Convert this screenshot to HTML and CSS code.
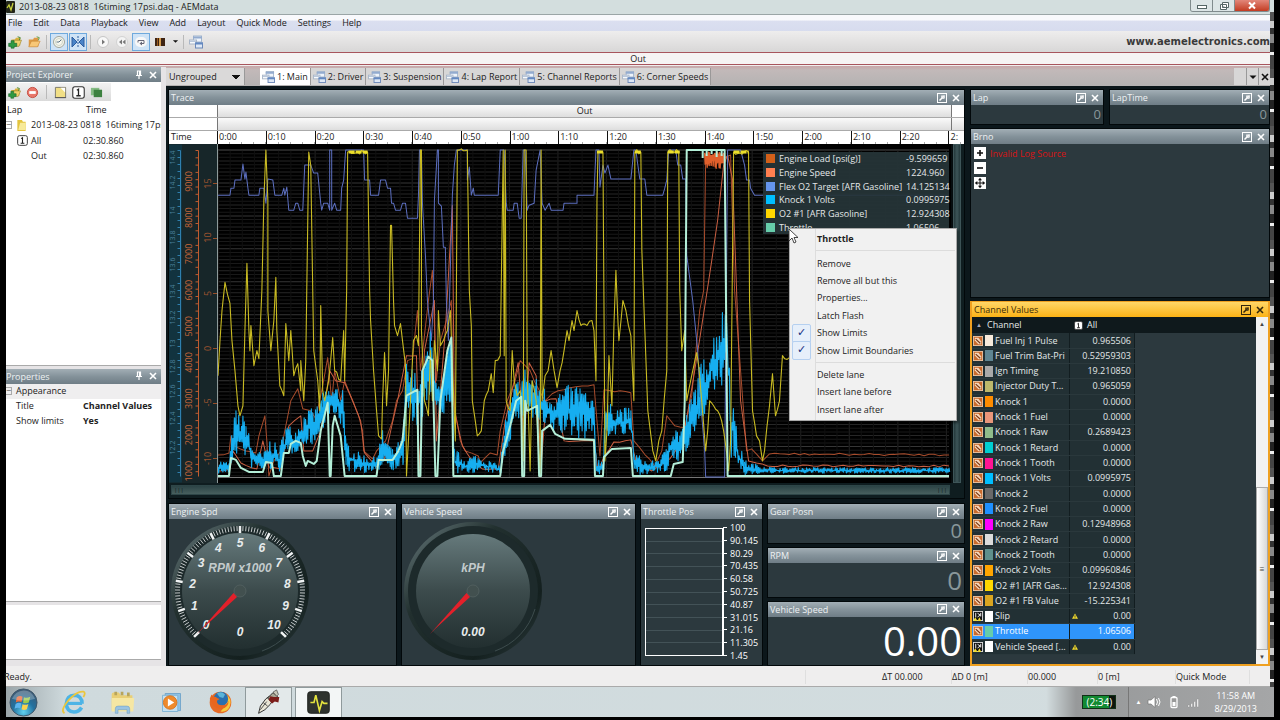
FILE: index.html
```html
<!DOCTYPE html>
<html lang="en">
<head>
<meta charset="utf-8">
<title>AEMdata</title>
<link rel="stylesheet" href="styles.css">
</head>
<body>
<svg class="defs" aria-hidden="true">
  <symbol id="i-wrench" viewBox="0 0 10 10"><rect x=".5" y=".5" width="9" height="9" fill="none" stroke="currentColor"/><path d="M2.5 7.5 5.5 4.5M5 2.5v2.5h2.500" fill="none" stroke="currentColor" stroke-width="1.500"/><path d="M5 3 7.500 2 8 5z" fill="currentColor"/></symbol>
  <symbol id="i-close" viewBox="0 0 10 10"><path d="M2 2l6 6M8 2l-6 6" stroke="currentColor" stroke-width="1.600"/></symbol>
  <symbol id="i-pin" viewBox="0 0 10 10"><path d="M3.500 1h3v4.500h-3zM2 5.500h6M5 5.500v3.500" fill="none" stroke="currentColor" stroke-width="1.200"/><path d="M5 1h1.500v4.500H5z" fill="currentColor"/></symbol>
  <symbol id="i-open" viewBox="0 0 16 14"><path d="M2 4h5l1-2h5v10H2z" fill="#dd9a45"/><path d="M5 6h10l-3 6.500H2z" fill="#f8c776" stroke="#c07a2c" stroke-width=".6"/><path d="M11 1l3 1-1 3" fill="none" stroke="#589a3a"/></symbol>
  <symbol id="i-openadd" viewBox="0 0 16 14"><path d="M4 4h4l1-2h5v9H4z" fill="#d8b23f"/><path d="M6 5h9.500l-3 7H4z" fill="#f0d06a" stroke="#8d7a2c" stroke-width=".6"/><path d="M11 1l3 1-1 3" fill="none" stroke="#39822b"/><path d="M3.500 5.500h3.500v3h3v3.500H7v2H3.500v-2H.8V8.500h2.700z" fill="#2f9a42" stroke="#17652a" stroke-width=".7"/></symbol>
  <symbol id="i-layout" viewBox="0 0 14 13"><rect x="4.500" y=".5" width="8" height="6" fill="#eef4fb" stroke="#a4b5cc"/><path d="M4 1h9v2H4z" fill="#93abcf"/><rect x=".5" y="4.500" width="7" height="4" fill="#f7fafd" stroke="#a9b6c8"/><path d="M1 5h6v1.500H1z" fill="#b9c7da"/><rect x="6.500" y="7.500" width="7" height="5" fill="#dfe9f6" stroke="#6b88b8"/><path d="M6 7h8v2H6z" fill="#6389c2"/></symbol>
  <symbol id="i-one" viewBox="0 0 12 12"><rect x=".7" y=".7" width="10.600" height="10.600" rx="2" fill="#fff" stroke="#333"/><path d="M4.500 4 6 3v6M4 9h4" fill="none" stroke="#222" stroke-width="1.200"/></symbol>
  <symbol id="i-chan" viewBox="0 0 11 11"><rect x=".5" y=".5" width="10" height="10" fill="#c96a2c" stroke="#efc3a0"/><path d="M2 2h4l3 4v3H6L2 5z" fill="#f6d8bd"/><path d="M3 3.500 8 8" stroke="#7c3510" stroke-width="1.300"/></symbol>
  <symbol id="i-math" viewBox="0 0 11 11"><rect x=".5" y=".5" width="10" height="10" fill="#111" stroke="#ddd"/><path d="M3 2v5M5 2.500l3 2-3 2M8.500 2v4" fill="none" stroke="#fff"/><path d="M0 11l2.500-4L5 11zM5 11l2-4 2 4z" fill="#f0dc33"/></symbol>
  <symbol id="i-warn" viewBox="0 0 8 8"><path d="M4 0.500 8 7.500H0z" fill="#f2dc2f"/><path d="M4 3v2.500M4 6v1" stroke="#222"/></symbol>
</svg>
<div class="screen">
<div class="window">
  <header class="titlebar">
    <svg class="appico" viewBox="0 0 9 12"><rect width="9" height="12" rx="1" fill="#22251a"/><path d="M1 7 3 4l2 5 2-7" fill="none" stroke="#c9d23c" stroke-width="1.300"/></svg>
    <span class="caption">2013-08-23 0818&nbsp; 16timing 17psi.daq - AEMdata</span>
    <div class="winbtns"><button aria-label="Minimize"><svg viewBox="0 0 12 10"><rect x="1.500" y="4.500" width="9" height="3" fill="#fff" stroke="#566"/></svg></button><button aria-label="Restore"><svg viewBox="0 0 12 10"><path d="M4.500 1.500h6v5h-6zM2.500 3.500h6v5h-6z" fill="#fff" stroke="#566"/><path d="M4.500 5.500h2v1h-2z" fill="#566"/></svg></button><button class="x" aria-label="Close"><svg viewBox="0 0 12 10"><path d="M3 1.500l6 6M9 1.500l-6 6" stroke="#fff" stroke-width="2"/></svg></button></div>
  </header>
  <nav class="menubar"><button>File</button><button>Edit</button><button>Data</button><button>Playback</button><button>View</button><button>Add</button><button>Layout</button><button>Quick Mode</button><button>Settings</button><button>Help</button></nav>
  <div class="toolbar">
    <button aria-label="Add log"><svg><use href="#i-openadd"/></svg></button>
    <button aria-label="Open log"><svg><use href="#i-open"/></svg></button>
    <i></i>
    <button class="on" aria-label="Clock"><svg viewBox="0 0 14 14"><circle cx="7" cy="7" r="5.500" fill="#f7f7ee" stroke="#a3a69a"/><path d="M7 7l3-3M7 7H4.500" stroke="#5c7285"/><circle cx="7" cy="7" r="3.500" fill="none" stroke="#cfd6c8"/></svg></button>
    <button class="on" aria-label="Mirror"><svg viewBox="0 0 14 14"><path d="M1 2l5 5-5 5zM13 2 8 7l5 5z" fill="#4a84c8" stroke="#2c5c9e"/><path d="M7 1v12" stroke="#2c5c9e" stroke-dasharray="2 1"/></svg></button>
    <i></i>
    <button aria-label="Play"><svg viewBox="0 0 14 14"><circle cx="7" cy="7" r="5.500" fill="#f8f8f8" stroke="#c6c6c6"/><path d="M6 4.500 9 7 6 9.500z" fill="#777"/></svg></button>
    <button aria-label="Rewind"><svg viewBox="0 0 14 14"><circle cx="7" cy="7" r="5.500" fill="#f4f4f4" stroke="#d2d2d2"/><path d="M7 4.500 4 7l3 2.500zM10.500 4.500l-3 2.500 3 2.500z" fill="#777"/></svg></button>
    <button class="on" aria-label="Loop"><svg viewBox="0 0 14 14"><rect x="1" y="2" width="12" height="10" rx="5" fill="#f8f8f8"/><path d="M4 7.500V5.500h6v3H7" fill="none" stroke="#667"/><path d="M8 6.500 5.500 8.500 8 10.500z" fill="#667"/></svg></button>
    <button aria-label="Speed"><svg viewBox="0 0 14 14"><path d="M2 3h10v8H2z" fill="#d49c4c"/><path d="M2 3h4v8H2zM8 3h4v8H8z" fill="#3e2413"/><path d="M4 3h1v8H4z" fill="#9a5a20"/></svg></button>
    <button class="drop" aria-label="More"><svg viewBox="0 0 14 14"><path d="M3 5h8l-4 4z" fill="#111"/></svg></button>
    <i></i>
    <button aria-label="Layouts"><svg><use href="#i-layout"/></svg></button>
    <a class="site" href="#">www.aemelectronics.com</a>
  </div>
  <div class="lapbar">Out</div>
  <div class="body">
    <aside class="side">
      <section class="tool explorer">
        <h2><span>Project Explorer</span><button aria-label="Pin"><svg><use href="#i-pin"/></svg></button><button aria-label="Close"><svg><use href="#i-close"/></svg></button></h2>
        <div class="minibar">
          <button aria-label="Add"><svg><use href="#i-openadd"/></svg></button>
          <button aria-label="Remove"><svg viewBox="0 0 14 14"><circle cx="7" cy="7" r="5.500" fill="#e8776a" stroke="#c2483e"/><path d="M3.500 5.500h7v3h-7z" fill="#fff"/></svg></button>
          <i></i>
          <button aria-label="Note"><svg viewBox="0 0 14 14"><path d="M1.500 1.500h11v11h-11z" fill="#f1df86" stroke="#77766a"/><path d="M7 2h5v5z" fill="#fff"/><path d="M1 12.500h12" stroke="#555"/></svg></button>
          <button aria-label="Lap"><svg><use href="#i-one"/></svg></button>
          <button aria-label="Compare"><svg viewBox="0 0 14 14"><path d="M1 2h9v8H1z" fill="#85bb84"/><path d="M4 4h9v8H4z" fill="#3d8140"/></svg></button>
        </div>
        <table class="laps">
          <tr><th>Lap</th><th>Time</th></tr>
          <tr><td colspan="2" class="file"><span class="tog">−</span><svg viewBox="0 0 11 13"><path d="M1 1h5l1 2h3v10H1z" fill="#e3c43f"/><path d="M4 4h6v8H2z" fill="#f7ea9a"/></svg>2013-08-23 0818&nbsp; 16timing 17psi.daq</td></tr>
          <tr><td class="lap"><svg><use href="#i-one"/></svg>All</td><td>02:30.860</td></tr>
          <tr><td class="lap out">Out</td><td>02:30.860</td></tr>
        </table>
      </section>
      <section class="tool props">
        <h2><span>Properties</span><button aria-label="Pin"><svg><use href="#i-pin"/></svg></button><button aria-label="Close"><svg><use href="#i-close"/></svg></button></h2>
        <table class="pg">
          <tr class="cat"><td colspan="2"><span class="tog">−</span>Appearance</td></tr>
          <tr><td>Title</td><td><b>Channel Values</b></td></tr>
          <tr><td>Show limits</td><td><b>Yes</b></td></tr>
        </table>
      </section>
      <section class="tool hint"></section>
    </aside>
    <main class="main">
      <div class="tabs">
        <select aria-label="Group"><option>Ungrouped</option></select>
        <button class="sel"><svg><use href="#i-layout"/></svg>1: Main</button>
        <button><svg><use href="#i-layout"/></svg>2: Driver</button>
        <button><svg><use href="#i-layout"/></svg>3: Suspension</button>
        <button><svg><use href="#i-layout"/></svg>4: Lap Report</button>
        <button><svg><use href="#i-layout"/></svg>5: Channel Reports</button>
        <button><svg><use href="#i-layout"/></svg>6: Corner Speeds</button>
        <div class="tabend"><button aria-label="Tab list"><svg viewBox="0 0 10 10"><path d="M1.500 3.500h7L5 7z" fill="#111"/></svg></button><button aria-label="Close tab"><svg><use href="#i-close"/></svg></button></div>
      </div>
      <div class="dock">
        <div class="center">
          <section class="panel trace">
            <h2><span>Trace</span><button aria-label="Settings"><svg><use href="#i-wrench"/></svg></button><button aria-label="Close"><svg><use href="#i-close"/></svg></button></h2>
            <div class="ruler">
              <div class="r1"><span></span><span class="mid">Out</span><span></span></div>
              <div class="r1"><span></span><span class="mid"></span><span class="sh"></span></div>
              <div class="r1 time"><span>Time</span><div class="ticks" id="ticks"></div></div>
            </div>
            <div class="plotrow">
              <svg class="axes" id="axes" viewBox="169 144 48 338"></svg>
              <div class="plot">
                <svg id="plot" viewBox="217 144 735 338" preserveAspectRatio="none"></svg>
                <div class="legend">
                  <i style="background:#d2601a"></i><span>Engine Load [psi(g)]</span><span>-9.599659</span>
                  <i style="background:#ff7f50"></i><span>Engine Speed</span><span>1224.960</span>
                  <i style="background:#6495ed"></i><span>Flex O2 Target [AFR Gasoline]</span><span>14.125134</span>
                  <i style="background:#00bfff"></i><span>Knock 1 Volts</span><span>0.0995975</span>
                  <i style="background:#ffd700"></i><span>O2 #1 [AFR Gasoline]</span><span>12.924308</span>
                  <i style="background:#66cdaa"></i><span>Throttle</span><span>1.06506</span>
                </div>
              </div>
              <div class="vscroll"><div></div></div>
            </div>
            <div class="hscroll"><div><span>|||</span><span>|||</span></div></div>
            <div class="ctx" role="menu">
              <button class="hd">Throttle</button><hr>
              <button>Remove</button><button>Remove all but this</button><button>Properties...</button><button>Latch Flash</button>
              <button class="ck">Show Limits</button><button class="ck">Show Limit Boundaries</button><hr>
              <button>Delete lane</button><button>Insert lane before</button><button>Insert lane after</button>
            </div>
            <svg class="cursor" viewBox="0 0 11 16"><path d="M1 1v12l3-3 2 5 2-1-2-4.500h4z" fill="#fff" stroke="#333" stroke-width=".9"/></svg>
          </section>
          <div class="gauges">
            <section class="panel"><h2><span>Engine Spd</span><button aria-label="Settings"><svg><use href="#i-wrench"/></svg></button><button aria-label="Close"><svg><use href="#i-close"/></svg></button></h2><svg class="dial" id="dial1" viewBox="-72 -72 144 144"></svg></section>
            <section class="panel"><h2><span>Vehicle Speed</span><button aria-label="Settings"><svg><use href="#i-wrench"/></svg></button><button aria-label="Close"><svg><use href="#i-close"/></svg></button></h2><svg class="dial" id="dial2" viewBox="-72 -72 144 144"></svg></section>
            <section class="panel"><h2><span>Throttle Pos</span><button aria-label="Settings"><svg><use href="#i-wrench"/></svg></button><button aria-label="Close"><svg><use href="#i-close"/></svg></button></h2>
              <div class="bar"><div class="barbox"><i></i><i></i><i></i><i></i><i></i><i></i><i></i><i></i><i></i><i></i></div>
              <div class="scale"><span>100</span><span>90.145</span><span>80.29</span><span>70.435</span><span>60.58</span><span>50.725</span><span>40.87</span><span>31.015</span><span>21.16</span><span>11.305</span><span>1.45</span></div></div>
            </section>
            <div class="stack">
              <section class="panel"><h2><span>Gear Posn</span><button aria-label="Settings"><svg><use href="#i-wrench"/></svg></button><button aria-label="Close"><svg><use href="#i-close"/></svg></button></h2><output class="n1">0</output></section>
              <section class="panel"><h2><span>RPM</span><button aria-label="Settings"><svg><use href="#i-wrench"/></svg></button><button aria-label="Close"><svg><use href="#i-close"/></svg></button></h2><output class="n2">0</output></section>
              <section class="panel"><h2><span>Vehicle Speed</span><button aria-label="Settings"><svg><use href="#i-wrench"/></svg></button><button aria-label="Close"><svg><use href="#i-close"/></svg></button></h2><output class="n3">0.00</output></section>
            </div>
          </div>
        </div>
        <div class="right">
          <div class="toprow">
            <section class="panel"><h2><span>Lap</span><button aria-label="Settings"><svg><use href="#i-wrench"/></svg></button><button aria-label="Close"><svg><use href="#i-close"/></svg></button></h2><output class="n0">0</output></section>
            <section class="panel"><h2><span>LapTime</span><button aria-label="Settings"><svg><use href="#i-wrench"/></svg></button><button aria-label="Close"><svg><use href="#i-close"/></svg></button></h2><output class="n0">0</output></section>
          </div>
          <section class="panel"><h2><span>Brno</span><button aria-label="Settings"><svg><use href="#i-wrench"/></svg></button><button aria-label="Close"><svg><use href="#i-close"/></svg></button></h2>
            <div class="map"><div><button aria-label="Zoom in"><svg viewBox="0 0 12 12"><path d="M6 3v6M3 6h6" stroke="#111" stroke-width="1.600"/></svg></button><button aria-label="Zoom out"><svg viewBox="0 0 12 12"><path d="M3 6h6" stroke="#111" stroke-width="1.600"/></svg></button><button aria-label="Fit"><svg viewBox="0 0 12 12"><path d="M6 2v8M2 6h8" stroke="#111"/><path d="M6 .8 8 3.300H4zM6 11.200 8 8.700H4zM.8 6 3.300 4v4zM11.200 6 8.700 4v4z" fill="#111"/></svg></button></div><p>Invalid Log Source</p></div>
          </section>
          <section class="panel active"><h2><span>Channel Values</span><button aria-label="Settings"><svg><use href="#i-wrench"/></svg></button><button aria-label="Close"><svg><use href="#i-close"/></svg></button></h2>
            <div class="chwrap"><div class="chlist">
              <div class="chead"><span class="up">▲</span><span>Channel</span><span class="all"><svg><use href="#i-one"/></svg>All</span></div>
              <div class="chbody"><table id="chan"></table></div>
            </div><div class="cscroll"><span>▲</span><div>≡</div><span>▼</span></div></div>
          </section>
        </div>
      </div>
    </main>
  </div>
  <footer class="status"><span>Ready.</span><span></span><span>ΔT 00.000</span><span>ΔD 0 [m]</span><span>00.000</span><span>0 [m]</span><span>Quick Mode</span><span></span></footer>
  <div class="edge"></div>
</div>
<div class="taskbar">
  <button class="orb" aria-label="Start"><svg viewBox="0 0 30 30"><defs><radialGradient id="g1" cx=".5" cy=".85" r=".8"><stop offset="0" stop-color="#5fd0ee"/><stop offset=".5" stop-color="#23719f"/><stop offset="1" stop-color="#3d5a74"/></radialGradient></defs><circle cx="15" cy="15" r="14" fill="url(#g1)" stroke="#40576a"/><path d="M8 9.500q3-2 6-.5l-1 5.500q-3-1.500-6 .5z" fill="#ee6a38"/><path d="M15.500 9.500q3 1.500 6.500-.5l-1.500 6q-3 1.500-6 .2z" fill="#9ccb4b"/><path d="M6.800 16.500q3-2 6-.5l-1 5q-3-1.500-6 .5z" fill="#5eb4ec"/><path d="M14 16.700q3 1.500 6-.2l-1.500 5.500q-3 1.500-5.500 0z" fill="#fbd14b"/><path d="M3 11q4-8 12-8.500T27 11q-12 4-24 0z" fill="#fff" opacity=".25"/></svg></button>
  <button aria-label="Internet Explorer"><svg viewBox="0 0 30 30"><path d="M24.500 16H8.500" stroke="#4db4e6" stroke-width="3.500"/><path d="M24 20.500q-3 5-8.500 5-8-.5-8.500-9 .5-9 9-9.500 8.500.5 8.500 9.500" fill="none" stroke="#4db4e6" stroke-width="4"/><path d="M5 27Q0 24 9 13 19 2 26 3q3 1 0 6" fill="none" stroke="#ecc63c" stroke-width="2"/></svg></button>
  <button aria-label="Explorer"><svg viewBox="0 0 30 30"><path d="M3 6q0-2 2-2h6l2 3h13v17H3z" fill="#e9cf76"/><path d="M6 3h3v4H6zM13 3h3v4h-3zM20 4h3v4h-3z" fill="#b7a45c"/><path d="M3 10h25l-1 15H3z" fill="#f6e7a3"/><path d="M7 27v-5q0-3 3-3h10q3 0 3 3v5h-3v-4H10v4z" fill="#9bc4e2" stroke="#6d9dc0" stroke-width=".6"/></svg></button>
  <button aria-label="Media Player"><svg viewBox="0 0 30 30"><path d="M8 5h17v19H8z" fill="#8fc3e6" stroke="#6fa4ca"/><path d="M5 7h17v18H5z" fill="#c4e0f0" stroke="#7cb1d3"/><circle cx="13.500" cy="15" r="7.500" fill="#ee8a2c" stroke="#d9731c"/><path d="M11 10.500 18 15l-7 4.500z" fill="#fff"/></svg></button>
  <button aria-label="Firefox"><svg viewBox="0 0 30 30"><circle cx="15" cy="15" r="12" fill="#e66a25"/><path d="M20 5q9 6 5 15-3 6-10 5 8-6 5-20z" fill="#f7c93c"/><circle cx="15.500" cy="11" r="8" fill="#2a6fae"/><path d="M11 5q5-3 9 1l-2 4-4-1z" fill="#5bb4d8"/><path d="M3 11 5 6l2 3q3-1 4 1l3 1-3 2q0 5 6 5 5 0 7-5 0 8-8 9-8 0-10-6z" fill="#e8661f"/></svg></button>
  <button class="run" aria-label="Tuner"><svg viewBox="0 0 30 30"><path d="M4 27 6 19l6-8 4-3 4 4-3 5-6 6z" fill="#e9e6d6" stroke="#222"/><path d="M14 10 20 4l5 4-6 7z" fill="#a9a795" stroke="#222"/><path d="M20 3.500l4-2.500 2 5-2 2z" fill="#c9c7b8" stroke="#333" stroke-width=".7"/><path d="M17 8l4 1 6 0-1 6-4-1-3 2-4-4z" fill="#7c1d1a"/><path d="M9 15l5 4M6 23l7-9" stroke="#444"/></svg></button>
  <button class="run act" aria-label="AEMdata"><svg viewBox="0 0 30 30"><rect x="3" y="3" width="24" height="24" rx="3" fill="#2f332e" stroke="#1b1e1b"/><path d="M6 15h4l2-8 4 17 3-10 2 2h4" fill="none" stroke="#e4e33e" stroke-width="1.800"/></svg></button>
  <div class="tray">
    <div class="batt"><span>(2:34)</span></div>
    <div class="notif">
      <span class="tri">▲</span>
      <svg viewBox="0 0 14 14"><path d="M1 5h3l4-3.500v11L4 9H1z" fill="#fff" stroke="#777" stroke-width=".7"/><path d="M9.500 4q2 3 0 6M11.500 3q3 4 0 8" fill="none" stroke="#fff"/></svg>
      <svg viewBox="0 0 14 14"><rect x="4" y="2.500" width="6" height="10" rx="1" fill="#999" stroke="#fff" stroke-width="1.300"/><path d="M5.500 1h3v2h-3zM5.500 7h3v4h-3z" fill="#fff"/></svg>
      <svg viewBox="0 0 14 14"><path d="M1 12v-2h1.500v2zM4 12V8.500h1.500V12zM7 12V6.500h1.500V12zM10 12V4h1.500v8z" fill="#fff" stroke="#888" stroke-width=".4"/></svg>
      <time>11:58 AM<br>8/29/2013</time>
    </div>
  </div>
</div>
</div>
<script src="app.js"></script>
</body>
</html>
```
FILE: styles.css
```css
* { box-sizing: border-box; }
html, body { height: 100%; margin: 0; background: #000; }
body { font: 9px/14px "Open Sans", "Noto Sans", sans-serif; color: #222; overflow: hidden; }
button, select, input { font: inherit; color: inherit; margin: 0; padding: 0; border: 0; background: none; }
h2, p { margin: 0; font-size: inherit; font-weight: normal; }
table { border-collapse: collapse; border-spacing: 0; }
td, th { padding: 0; text-align: left; font-weight: normal; }
svg { display: block; flex: none; }
.defs { position: absolute; width: 0; height: 0; }

.screen { height: 100vh; padding: 0 6px 3px; display: flex; flex-direction: column; }
.window { flex: 1; min-height: 0; display: flex; flex-direction: column; position: relative; padding-right: 4px; background: #efeeee; }
.edge { position: absolute; inset: 12px 0 0 auto; width: 4px; background: repeating-linear-gradient(#555 0 9px, #ccc 9px 16px, #333 16px 22px, #888 22px 31px, #222 31px 40px, #eee 40px 43px, #444 43px 57px); }

.titlebar { display: flex; align-items: center; height: 15px; margin-right: -4px; background: #d3dede; border-bottom: 1px solid #9aa5a6; }
.appico { width: 9px; height: 12px; }
.caption { flex: 1; padding-left: 4px; }
.winbtns { display: flex; align-self: flex-start; height: 12px; margin-right: 4px; border: solid #808b8d; border-width: 0 1px 1px; border-radius: 0 0 3px 3px; overflow: hidden; }
.winbtns button { width: 22px; display: flex; justify-content: center; align-items: center; border-right: 1px solid #808b8d; background: #dce5e6; }
.winbtns svg { width: 12px; height: 10px; }
.winbtns .x { width: 34px; border: 0; background: linear-gradient(#e2877a, #c33c22); }

.menubar { display: flex; align-items: center; gap: 11px; height: 16px; background: linear-gradient(#f8f9fc 30%, #dbdff0 40%, #d7dcee); padding-left: 2px; }
.toolbar { display: flex; align-items: center; gap: 1px; height: 21px; background: linear-gradient(#eeeded, #d8d7d7); }
.toolbar button { width: 18px; height: 18px; display: grid; place-items: center; }
.toolbar svg { width: 14px; height: 14px; }
.toolbar i, .minibar i { width: 1px; height: 14px; margin: 0 2px; background: #b9b9b9; }
.toolbar .on { border: 1px solid #6fa9dd; background: #cfe3f6; }
.toolbar .drop { width: 10px; }
.toolbar .drop svg { width: 9px; height: 9px; }
.site { margin-left: auto; font: bold 10px/14px "DejaVu Sans", sans-serif; color: #3a3a3a; text-decoration: none; }
.lapbar { height: 13px; border: solid #a8545c; border-width: 1px 0; background: #f6f3f3; text-align: center; line-height: 11px; }

.body { flex: 1; min-height: 0; display: flex; padding-top: 1px; background: #efeeee; }
.side { width: 160px; display: flex; flex-direction: column; gap: 3px; padding: 0 5px 6px 0; background: #e6e4e6; border-top: 1px solid #c9adaf; }
.tool { display: flex; flex-direction: column; background: #fff; overflow: hidden; white-space: nowrap; border-bottom: 1px solid #aaa; min-height: 0; }
.explorer { flex: 300 0 0; }
.props { flex: 234 0 0; }
.hint { flex: 54 0 0; }
h2 { display: flex; align-items: center; gap: 4px; height: 15px; line-height: 15px; padding: 0 3px 0 2px; flex: none; background: linear-gradient(#a2aeb5, #84929a 50%, #6f7d86); color: #eef1f3; }
h2 span { flex: 1; }
h2 svg { width: 10px; height: 10px; color: #fff; }
.tool h2 span { text-indent: -2px; }
.minibar { display: flex; align-items: center; gap: 5px; width: 105px; height: 18px; background: linear-gradient(#f2f2f2, #dadada); margin-top: 1px; padding-left: 2px; }
.minibar svg { width: 13px; height: 13px; }
.laps { margin-top: 1px; width: 100%; table-layout: fixed; }
.laps tr { height: 15px; }
.laps th:first-child { width: 77px; padding-left: 1px; }
.laps th:last-child { padding-left: 3px; }
.laps .file { display: flex; align-items: center; gap: 4px; height: 16px; }
.laps .file svg { width: 11px; height: 12px; }
.tog { width: 6px; height: 8px; font-size: 9px; line-height: 6px; border: 1px solid #aaa; border-left: 0; flex: none; color: #555; }
.lap svg { width: 11px; height: 11px; display: inline-block; vertical-align: -2px; margin: 0 3px 0 11px; }
.lap.out { padding-left: 25px; }
.pg { width: 100%; }
.pg tr { height: 15px; }
.pg td:first-child { width: 77px; padding-left: 10px; }
.pg .cat { background: #efeeef; }
.pg .cat td:first-child { padding-left: 0; }
.pg .tog { display: inline-block; margin-right: 4px; }

.main { flex: 1; min-width: 0; display: flex; flex-direction: column; }
.tabs { display: flex; align-items: flex-end; height: 20px; padding-bottom: 1px; background: linear-gradient(#c9a6a8, #c2b9b9 20%, #b4b2b2); white-space: nowrap; }
.tabs > select { appearance: none; width: 79px; height: 17px; margin-right: 15px; padding-left: 3px; border-right: 1px solid #999; background-color: #dad9d9; background-image: linear-gradient(to bottom left, #111 50%, transparent 52%), linear-gradient(to bottom right, #111 50%, transparent 52%); background-size: 4px 4px; background-position: right 8px center, right 4px center; background-repeat: no-repeat; }
.tabs > button { display: flex; align-items: center; gap: 2px; height: 17px; padding: 0 2px; background: #d7d6d6; border-right: 1px solid #9a9898; }
.tabs > button svg { width: 13px; height: 12px; }
.tabs > .sel { background: #fff; }
.tabend { margin-left: auto; display: flex; height: 17px; padding-left: 12px; background: #d7d6d6; }
.tabend button { width: 12px; border-left: 1px solid #999; color: #111; display: grid; place-items: center; }
.tabend svg { width: 10px; height: 10px; }

.dock { flex: 1; min-height: 0; display: flex; gap: 5px; padding: 3px 0 0 2px; background: #0c171b; }
.center { flex: 1; min-width: 0; display: flex; flex-direction: column; gap: 4px; }
.panel { display: flex; flex-direction: column; min-width: 0; min-height: 0; background: #2c393e; border: 1px solid #02080a; position: relative; color: #e4e8e9; }
.trace { flex: 1; }

.ruler { background: #fff; color: #222; flex: none; }
.r1 { display: grid; grid-template-columns: 48px 1fr 12px; height: 13px; line-height: 12px; border-bottom: 1px solid #aaa; }
.r1 .mid { text-align: center; border: solid #777; border-width: 0 1px; background: linear-gradient(#fafafa, #dedede); }
.r1 .sh { background: linear-gradient(#fafafa, #dedede); }
.time { grid-template-columns: 48px 1fr; border: 0; }
.time > span { padding-left: 2px; }
.ticks { display: flex; overflow: hidden; }
.ticks span { flex: 0 0 6.530%; border-left: 1px solid #111; padding-left: 1px; background: repeating-linear-gradient(90deg, transparent 0 11px, #aaa 11px 12px) 0 100% / 100% 2px no-repeat; }
.plotrow { flex: 1; min-height: 0; display: flex; }
.axes { width: 48px; height: 100%; background: #172629; }
.plot { flex: 1; min-width: 0; position: relative; background: #000; border-left: 1px solid #8d9a9a; }
.plot > svg { width: 100%; height: 100%; position: absolute; inset: 0; }
.legend { position: absolute; top: 8px; right: 2px; width: 186px; height: 82px; display: grid; grid-template: repeat(6, 1fr) / 9px 1fr 44px; column-gap: 4px; align-items: center; padding-left: 3px; background: #263438ee; white-space: nowrap; line-height: 13px; }
.legend i { width: 9px; height: 9px; }
.vscroll { width: 13px; background: #0f1d20; border-left: 2px solid #060d0f; }
.vscroll div { width: 8px; height: 100%; background: linear-gradient(90deg, #24383b, #3d5558, #24383b); border: 1px solid #3e5558; }
.hscroll { height: 15px; padding: 2px 14px 2px 2px; background: #0f1d20; flex: none; }
.hscroll div { display: flex; justify-content: space-between; height: 10px; padding: 0 2px; line-height: 8px; font-size: 6px; background: linear-gradient(#2c4345, #48605f); border: 1px solid #2e4648; color: #0c1719; }

.ctx { position: absolute; z-index: 3; top: 138px; right: 7px; width: 168px; height: 193px; padding: 1px 2px 2px; display: flex; flex-direction: column; background: linear-gradient(90deg, #f0f0f0 25px, #ddd 25px 26px, #f1f1f1 26px); border: 1px solid #aaa; box-shadow: 2px 2px 2px #0006; color: #222; }
.ctx button { flex: 1; text-align: left; padding-left: 25px; position: relative; line-height: 15px; }
.ctx .hd { font-weight: bold; }
.ctx hr { width: 139px; height: 1px; margin: 3px 0 3px 24px; border: 0; background: #dcdcdc; }
.ctx .ck::before { content: "✓"; position: absolute; left: 0; top: 0; width: 17px; height: 17px; border: 1px solid #b5d0f0; border-radius: 2px; background: #e6effa; text-align: center; font: bold 11px/15px "DejaVu Sans", sans-serif; color: #152d80; }
.cursor { position: absolute; z-index: 4; top: 138px; right: 165px; width: 11px; height: 16px; }

.gauges { display: grid; grid-template-columns: 229fr 235fr 123fr 198fr; gap: 4px; height: 163px; flex: none; }
.dial { width: 144px; height: 144px; margin-left: -1px; }
.stack, .right { display: flex; flex-direction: column; gap: 3px; min-width: 0; }
.stack .panel:nth-child(1) { flex: 41 0 0; }
.stack .panel:nth-child(2) { flex: 50 0 0; }
.stack .panel:nth-child(3) { flex: 66 0 0; }
output { flex: 1; display: flex; justify-content: flex-end; align-items: center; padding-right: 2px; line-height: 1; min-height: 0; color: #89979a; }
.n0 { font-size: 13px; }
.n1 { font-size: 20px; }
.n2 { font-size: 26px; }
.n3 { font-size: 40px; color: #fff; }
.bar { flex: 1; display: flex; gap: 2px; padding: 9px 0 9px 4px; }
.barbox { width: 79px; border: 1px solid #fff; border-right-width: 2px; display: flex; flex-direction: column; }
.barbox i { flex: 1; border-bottom: 1px solid #435257; }
.barbox i:last-child { border: 0; }
.scale { display: flex; flex-direction: column; justify-content: space-between; margin: -6px 0 -6px -3px; line-height: 12px; color: #fff; }
.scale span::before { content: ""; display: inline-block; width: 4px; height: 1px; margin-right: 3px; vertical-align: 3px; background: #fff; }

.right { width: 300px; flex: none; }
.toprow { display: grid; grid-template-columns: 134fr 161fr; gap: 5px; height: 36px; flex: none; }
.right > .panel:nth-child(2) { flex: 170 0 0; }
.right > .panel:nth-child(3) { flex: 365 0 0; }
.map { display: flex; gap: 4px; padding: 3px 3px; }
.map div { display: flex; flex-direction: column; gap: 3px; }
.map button { width: 12px; height: 12px; background: #fff; }
.map p { color: #d81414; line-height: 14px; }
.active { border: 2px solid #efa020; border-top-width: 1px; }
.active h2 { background: linear-gradient(#ffd768, #fbb216); color: #3c2c08; }
.active h2 svg { color: #33270c; }
.chwrap { flex: 1; min-height: 0; display: flex; }
.chlist { flex: 1; display: flex; flex-direction: column; }
.chead { display: grid; grid-template-columns: 15px 83px 1fr; height: 16px; line-height: 16px; background: #0f191c; flex: none; }
.chead .up { font-size: 6px; padding-left: 4px; color: #aab; }
.all { display: flex; align-items: center; gap: 4px; padding-left: 4px; }
.all svg { width: 9px; height: 9px; }
.chbody { flex: 1; min-height: 0; padding-bottom: 9px; }
.chbody table { height: 100%; width: 163px; table-layout: fixed; background: #223034; }
.chbody td { border-right: 1px solid #121d20; border-bottom: 1px solid #2a383c; white-space: nowrap; overflow: hidden; line-height: 14px; height: 14px; }
.chbody td > div { display: flex; align-items: center; gap: 2px; padding-left: 1px; }
.chbody td > div.v { justify-content: space-between; padding: 0 3px 0 2px; }
.chbody td > div.v b { font-weight: normal; margin-left: auto; }
.chbody i { width: 8px; height: 11px; }
.chbody svg { width: 10px; height: 10px; }
.chbody .v svg { width: 6px; height: 6px; }
.chbody tr.hl { background: #2f95fb; color: #fff; }
.cscroll { width: 12px; display: flex; flex-direction: column; background: #f2f2f2; color: #444; text-align: center; font-size: 6px; }
.cscroll div { margin-top: auto; height: 47%; border: 1px solid #aaa; background: linear-gradient(90deg, #fff, #d8d8d8); display: grid; place-items: center; font-size: 8px; }

.status { display: grid; grid-template-columns: 1fr 76px 70px 76px 70px 78px 74px 20px; align-items: center; height: 20px; margin-top: 1px; background: #efeeee; border-bottom: 1px solid #aaa; }
.status span { border-right: 1px solid #dfdfdf; }
.status span:first-child { text-indent: -2px; }
.taskbar { display: flex; align-items: center; height: 30px; background: linear-gradient(90deg, #9aa5a9, #cfdadd 60px, #d3dddf); }
.taskbar > button { width: 49px; height: 30px; display: grid; place-items: center; }
.taskbar > .orb { width: 36px; padding-right: 2px; margin-right: 7px; }
.taskbar button svg { width: 27px; height: 27px; }
.taskbar .orb svg { width: 29px; height: 29px; }
.taskbar > .run { width: 47px; margin-right: 3px; background: #e3e9ea; border: 1px solid #8f9a9c; border-width: 1px 1px 0; }
.taskbar > .act { background: #f3f6f6; }
.tray { margin-left: auto; display: flex; height: 100%; align-items: center; padding-right: 4px; background: linear-gradient(90deg, #d3dddf, #97999a 30px, #a5a6a7); padding-left: 36px; }
.batt { width: 34px; height: 14px; background: linear-gradient(90deg, #128a32 80%, #0c150e 80%); border: 1px solid #123018; color: #fff; text-align: center; line-height: 12px; margin-right: 12px; font-size: 10px; }
.notif { display: flex; align-items: center; gap: 6px; height: 30px; border-left: 1px solid #777; padding: 0 13px 0 6px; color: #fff; }
.tri { font-size: 6px; }
.notif svg { width: 14px; height: 14px; }
time { text-align: center; line-height: 13px; padding-left: 7px; }
```
FILE: app.js
```js
const $ = id => document.getElementById(id);

// Time ruler
let t = '';
for (let s = 0; s < 150; s += 10) t += `<span>${Math.floor(s / 60)}:${String(s % 60).padStart(2, '0')}</span>`;
$('ticks').innerHTML = t + '<span>2:</span>';

// Axis scales
let a = '';
const axis = (x, color, step) => {
  a += `<path d="M${x} 150V476" stroke="${color}"/>`;
  for (let y = 150; y <= 476; y += step) a += `<path d="M${x - 3} ${y}h3" stroke="${color}"/>`;
};
const labels = (x, color, size, list) => list.forEach(([s, y]) =>
  a += `<text transform="translate(${x} ${y}) rotate(-90)" text-anchor="middle" font-size="${size}" fill="${color}">${s}</text>`);
a += '<rect x="169" y="144" width="13" height="338" fill="#12333f"/>';
axis(180.5, '#2f7fae', 7);
axis(198.5, '#c05c30', 7.3);
for (let y = 183; y < 480; y += 55) a += `<path d="M213 ${y}h4" stroke="#9a4d26"/>`;
labels(175, '#4a7f98', 7, [['14.4', 157], ['14.2', 182], ['14', 210], ['13.8', 237], ['13.6', 264], ['13.4', 291], ['13.2', 317], ['13', 343], ['12.8', 366], ['12.6', 391], ['12.4', 418], ['12.2', 447]]);
labels(192, '#c8673a', 9, [9000, 8000, 7000, 6000, 5000, 4000, 3000, 2000, 1000].map((v, i) => [v, 181 + i * 36.2]));
labels(211, '#a0552f', 9, [['15', 183], ['10', 237], ['5', 293], ['0', 348], ['-5', 402], ['-10', 458]]);
$('axes').innerHTML = a;

// Traces
let seed = 7;
const rnd = () => (seed = (seed * 16807) % 2147483647) / 2147483647;
const line = (pts, color, w = 1, extra = '') =>
  `<polyline points="${pts}" fill="none" stroke="${color}" stroke-width="${w}" stroke-linejoin="round" ${extra}/>`;
const rough = (pts, amp, step) => {
  const p = pts.trim().split(/\s+/).map(s => s.split(',').map(Number));
  let out = '';
  for (let i = 0; i < p.length - 1; i++) {
    const [x0, y0] = p[i], [x1, y1] = p[i + 1], n = Math.max(1, Math.floor((x1 - x0) / step));
    out += `${x0},${y0} `;
    for (let k = 1; k < n; k++) out += `${x0 + (x1 - x0) * k / n},${y0 + (y1 - y0) * k / n + (rnd() - .5) * amp} `;
  }
  return out + p[p.length - 1];
};

let g = '';
for (let y = 150, i = 0; y < 478; y += 3.65, i++) g += `<path d="M217 ${y}H950" stroke="${i % 9 === 0 ? '#363636' : i % 3 === 0 ? '#272727' : '#191919'}"/>`;
for (let x = 217; x < 952; x += 12.17) g += `<path d="M${x} 150V476" stroke="#101010"/>`;
for (let x = 217; x < 952; x += 48.7) g += `<path d="M${x} 150V476" stroke="#1d1d1d"/>`;
g += '<path d="M217 476.500H950" stroke="#777"/><path d="M217 150H950" stroke="#333"/>';

const flex = '217,195 229,195 230,188 233,188 234,180 240,180 242,164 244,179 245,172 247,188 248,195 258,195 259,188 263,188 265,203 267,179 272,180 274,195 281,195 283,188 284,195 286,187 288,210 293,210 295,203 297,203 299,210 302,210 304,165 310,165 313,173 317,173 320,203 321,210 323,203 327,203 329,210 329,150 331,150 331,210 334,203 336,210 340,210 341,188 343,180 345,150 363,150 364,180 369,180 370,195 378,195 380,180 385,180 387,188 390,188 391,203 393,203 395,210 400,210 402,203 405,203 407,218 417,218 418,195 419,150 421,150 422,203 425,255 427,300 431,340 433,300 434,200 437,150 438,150 438,203 441,206 443,247 445,247 446,300 448,340 452,195 454,165 456,150 467,150 467,180 469,167 471,195 473,188 474,195 498,195 500,150 504,150 506,203 507,210 513,210 514,203 517,203 519,218 521,218 523,150 525,150 527,210 529,205 534,203 536,170 540,150 542,203 545,210 549,203 551,210 563,210 564,203 577,203 577,195 594,195 596,150 599,150 600,187 603,165 605,173 608,165 611,179 631,179 634,150 636,150 638,165 640,179 645,179 647,195 663,195 665,188 667,180 669,150 676,150 678,165 681,165 683,179 686,179 687,255 693,300 698,350 700,390 705,450 706,476 725,476 728,150 741,150 745,165 747,180 750,180 751,188 755,195 950,195';
const afr = '217,375 219,340 221,310 224,282 229,303 231,340 234,370 237,405 239,415 242,405 244,330 246,263 248,330 249,350 250,325 253,365 256,350 258,358 261,290 263,200 265,150 267,200 267,310 270,350 273,320 275,277 276,330 279,385 283,395 285,323 288,360 290,330 293,375 297,363 300,390 300,360 303,400 305,360 306,290 308,152 310,165 312,290 313,350 317,380 319,410 320,305 322,390 324,400 328,380 332,337 334,370 340,380 343,330 344,380 346,290 347,152 367,152 369,290 370,320 373,370 376,410 378,435 381,438 382,400 384,352 385,375 386,405 388,370 390,225 391,225 393,300 394,325 397,335 400,323 402,340 405,365 406,475 410,400 413,340 416,335 418,345 420,150 421,150 421,330 424,400 428,415 430,350 432,400 434,340 437,370 438,310 440,345 443,340 447,330 450,310 455,440 457,150 467,150 469,290 471,325 472,400 475,420 477,435 481,430 484,400 488,390 491,373 493,392 495,360 500,355 503,150 504,355 505,150 506,400 510,410 512,350 514,380 517,395 520,390 523,460 524,150 526,150 527,370 530,470 532,380 536,400 540,475 541,150 542,400 545,375 548,370 551,350 554,370 557,387 560,370 564,350 567,330 569,340 572,320 574,330 577,310 581,325 587,325 592,320 594,330 596,380 597,200 598,152 603,152 604,300 605,460 607,430 609,355 612,405 614,325 616,270 618,320 619,340 623,300 626,310 631,335 634,400 635,152 641,152 642,250 645,330 648,410 653,450 656,460 659,440 662,430 667,370 668,152 679,152 680,290 682,350 685,330 687,400 692,375 697,352 699,365 702,400 706,450 708,430 710,400 714,405 718,410 722,420 724,430 729,470 731,440 734,152 749,152 750,300 753,410 757,435 760,440 763,460 765,450 770,405 773,373 776,415 780,400 783,355 790,357';
const load = '217,454 228,452 230,435 233,445 245,450 255,452 258,435 264,415 266,440 268,475 273,460 280,450 290,400 297,388 302,408 310,410 315,418 322,385 327,357 331,400 334,370 340,400 344,380 352,400 358,415 362,430 363,450 372,458 376,450 385,440 392,420 396,400 402,390 407,360 412,358 417,310 420,370 428,300 432,270 436,380 440,340 446,320 451,300 453,400 460,440 465,450 478,455 480,462 490,452 497,454 500,430 507,400 515,380 520,360 525,365 530,370 534,380 542,395 545,400 552,393 570,387 594,384 597,420 600,455 604,389 631,392 634,440 640,447 655,465 662,450 667,415 675,425 685,427 692,395 700,310 704,290 706,160 724,158 731,155 735,290 747,450 752,448 763,460 770,453 950,454';
const speed = '217,470 229,468 232,450 240,462 256,468 262,440 268,466 280,468 288,425 300,415 303,450 312,450 320,430 329,370 335,380 344,382 352,400 360,420 364,452 376,466 384,458 397,400 406,355 416,355 419,470 424,350 430,320 434,300 436,440 445,330 452,205 454,410 462,445 472,460 482,468 498,468 505,420 518,362 524,440 529,362 536,375 541,465 546,400 556,398 564,440 594,440 598,470 604,456 614,441 631,439 636,460 652,470 670,458 683,440 695,370 706,300 718,220 724,165 728,155 733,180 741,400 749,460 757,462 768,465 950,465';
const thr = '217,475 228,475 230,457 235,459 240,467 248,471 262,471 265,461 271,462 273,475 280,475 283,452 288,452 290,443 295,440 300,442 302,455 305,465 307,460 313,463 316,460 320,430 325,410 327,402 329,475 330,475 332,425 334,415 340,435 344,475 376,475 378,459 392,459 398,450 402,440 406,395 417,389 418,475 420,475 422,370 428,356 432,360 435,475 437,475 440,400 447,350 451,337 453,475 500,475 503,450 510,425 516,400 521,396 522,475 524,475 525,400 527,410 537,405 539,475 541,475 542,430 550,424 555,433 565,438 594,439 595,475 603,475 604,456 612,448 631,447 633,475 671,475 674,463 683,461 685,400 687,150 725,150 728,475 950,475';
const env = [[217,460,472],[228,462,472],[232,425,455],[235,412,452],[245,420,455],[250,445,466],[262,455,470],[270,438,468],[278,450,470],[285,425,455],[295,430,450],[305,412,442],[315,410,442],[322,395,425],[328,390,412],[342,385,430],[345,440,470],[355,452,470],[375,458,472],[382,432,462],[392,450,468],[402,438,465],[406,365,420],[420,380,425],[430,335,395],[440,390,425],[450,340,400],[454,450,472],[465,458,473],[475,455,470],[500,465,472],[504,425,455],[515,385,420],[525,370,415],[540,385,425],[550,395,430],[580,385,436],[594,405,434],[596,458,474],[603,460,472],[605,405,434],[631,410,434],[634,452,473],[650,463,472],[665,452,472],[672,425,462],[680,430,460],[690,405,440],[700,370,425],[710,350,395],[720,318,385],[727,308,370],[731,380,455],[738,440,472],[745,460,474],[752,463,473],[775,467,472],[950,467,472]];
let volts = '';
for (let i = 0; i < env.length - 1; i++) {
  const [x0, a0, b0] = env[i], [x1, a1, b1] = env[i + 1];
  for (let x = x0; x < x1; x += 1.4) {
    const f = (x - x0) / (x1 - x0), lo = a0 + (a1 - a0) * f, hi = b0 + (b1 - b0) * f, m = (lo + hi) / 2, h = (hi - lo) / 2;
    volts += `${x.toFixed(1)},${(m - h * 1.2 * rnd()).toFixed(1)} ${(x + .7).toFixed(1)},${(m + h * 1.1 * rnd()).toFixed(1)} `;
  }
}
g += line(rough(load, 2, 5), '#a84c2c') + line(rough(speed, 2, 5), '#cc6042');
g += line(flex, '#5c6fc0');
g += line(volts, '#16aef0', 1.1);
g += line(rough(afr, 5, 2), '#c9bb22', 1.1);
let band = '';
for (let x = 705; x < 725; x++) band += `${x},${152 + rnd() * 4} ${x + .5},${160 + rnd() * 9} `;
g += line(band, '#e0602c', 1.4);
g += '<path d="M348 152h19M597 152h7M635 152h7M668 152h12M734 152h15" stroke="#ecdf2a" stroke-width="3" stroke-dasharray="6 1"/>';
g += line(thr, '#b4efd8', 2);
g += '<path d="M703 151v7M707 151v5M712 151v3M717 151v6M722 151v5" stroke="#b4efd8" stroke-width="2"/>';
$('plot').innerHTML = g;

// Dials
const font = 'font-family="Liberation Sans, sans-serif" font-weight="bold" font-style="italic" text-anchor="middle" fill="#e8eced"';
const needle = '<circle r="6" fill="#42504f" stroke="#5a6868" stroke-width=".6"/><path d="M-6.500 2 -3 6 -38 38-43 43Z" fill="#e3202a"/>';
const base = (id, inner) => `<defs><linearGradient id="${id}r" x1="0" y1="0" x2="1" y2="1"><stop offset="0" stop-color="#6d8083"/><stop offset=".35" stop-color="#22302f"/><stop offset=".75" stop-color="#14201f"/><stop offset="1" stop-color="#2e3d3f"/></linearGradient><linearGradient id="${id}f" x1="0" y1="0" x2="0" y2="1"><stop offset="0" stop-color="#667a7c"/><stop offset=".5" stop-color="#3c4b4c"/><stop offset="1" stop-color="#222f30"/></linearGradient></defs><circle r="69" fill="url(#${id}r)"/><circle r="65" fill="#1d2a2b"/><circle r="${inner}" fill="url(#${id}f)"/><path d="M22 60A64 64 0 0 0 62 18" fill="none" stroke="#3d4c4d"/>`;
let d = base('a', 58);
for (let i = 0; i <= 100; i++) {
  const r = (-135 + i * 2.7) * Math.PI / 180, big = i % 10 === 0, s = Math.sin(r), c = -Math.cos(r), n = big ? 58 : 60;
  d += `<path d="M${n * s} ${n * c}L${65 * s} ${65 * c}" stroke="#f0f3f3" stroke-width="${big ? 2.5 : .8}"/>`;
  if (big) d += `<text x="${48 * s}" y="${48 * c + 4}" font-size="12" ${font}>${i / 10}</text>`;
}
d += `<text y="-19" font-size="12" ${font} style="fill:#c3cbcc">RPM x1000</text><text y="45" font-size="12" ${font}>0</text>${needle}`;
$('dial1').innerHTML = d;
$('dial2').innerHTML = base('b', 57) + `<text y="-19" font-size="12" ${font} style="fill:#c3cbcc">kPH</text><text y="45" font-size="12" ${font}>0.00</text>${needle}`;

// Channel table
const rows = [['Fuel Inj 1 Pulse', '0.965506', '#f7eadb'], ['Fuel Trim Bat-Pri', '0.52959303', '#5f8592'], ['Ign Timing', '19.210850', '#a9a9a9'], ['Injector Duty T...', '0.965059', '#bdb76b'], ['Knock 1', '0.0000', '#ff8c00'], ['Knock 1 Fuel', '0.0000', '#e9967a'], ['Knock 1 Raw', '0.2689423', '#8fbc8b'], ['Knock 1 Retard', '0.0000', '#00ced1'], ['Knock 1 Tooth', '0.0000', '#ff1493'], ['Knock 1 Volts', '0.0995975', '#00bfff'], ['Knock 2', '0.0000', '#696969'], ['Knock 2 Fuel', '0.0000', '#1e90ff'], ['Knock 2 Raw', '0.12948968', '#ff00ff'], ['Knock 2 Retard', '0.0000', '#dcdcdc'], ['Knock 2 Tooth', '0.0000', '#5f8f8c'], ['Knock 2 Volts', '0.09960846', '#ffa500'], ['O2 #1 [AFR Gas...', '12.924308', '#ffd700'], ['O2 #1 FB Value', '-15.225341', '#daa520'], ['Slip', '0.00', '#ffffff', 1], ['Throttle', '1.06506', '#66cdaa'], ['Vehicle Speed [...', '0.00', '#ffffff', 1]];
$('chan').innerHTML = '<colgroup><col style="width:60%"><col></colgroup>' + rows.map(([n, v, c, m]) =>
  `<tr class="${n === 'Throttle' ? 'hl' : ''}"><td><div><svg><use href="#i-${m ? 'math' : 'chan'}"/></svg><i style="background:${c}"></i>${n}</div></td><td><div class="v">${m ? '<svg><use href="#i-warn"/></svg>' : ''}<b>${v}</b></div></td></tr>`).join('');
```
